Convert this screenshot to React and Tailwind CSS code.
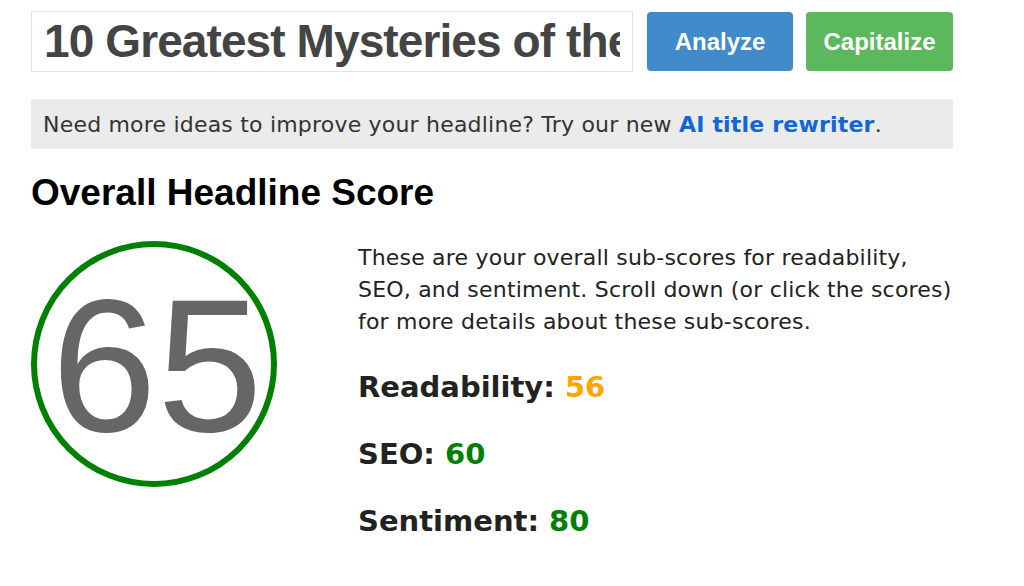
export default function App() {
  return (
    <div className="w-[1024px] h-[586px] bg-white overflow-hidden pl-[31px] pt-[11px]" style={{ fontFamily: '"Liberation Sans", Arial, sans-serif' }}>
      {/* Headline input + actions */}
      <div className="flex items-start w-[922px]">
        <input
          readOnly
          value="10 Greatest Mysteries of the Universe"
          className="w-[602px] h-[61px] border border-[#e3e3e3] px-[12px] text-[46px] tracking-[-0.9px] font-bold text-[#444] outline-none"
          style={{ fontFamily: '"Liberation Sans", Arial, sans-serif' }}
        />
        <button className="ml-[14px] mt-px w-[146px] h-[59px] rounded bg-[#428bca] text-white text-[24px] font-bold">
          Analyze
        </button>
        <button className="ml-[13px] mt-px w-[147px] h-[59px] rounded bg-[#5cb85c] text-white text-[24px] font-bold">
          Capitalize
        </button>
      </div>

      {/* Rewriter tip */}
      <div className="mt-[27px] w-[922px] h-[50px] bg-[#ebebeb] flex items-center px-[12px] text-[22px] text-[#333]" style={{ fontFamily: '"DejaVu Sans", Verdana, sans-serif' }}>
        <span className="tracking-[0.2px]">
          Need more ideas to improve your headline? Try our new <a className="text-[#1266d9] font-bold">AI title rewriter</a>.
        </span>
      </div>

      <h2 className="mt-[23px] text-[37px] leading-[42px] font-bold text-black">Overall Headline Score</h2>

      <div className="flex mt-[27px]">
        {/* Score ring */}
        <div className="w-[246px] h-[246px] rounded-full border-[6px] border-[#008000] flex items-center justify-center shrink-0 pl-[6px]">
          <span className="text-[190px] leading-none text-[#666] mt-[2px]">65</span>
        </div>

        {/* Sub-scores */}
        <div className="ml-[81px] mt-[1px] text-[#222]" style={{ fontFamily: '"DejaVu Sans", Verdana, sans-serif' }}>
          <p className="text-[22px] leading-[32px] w-[620px] tracking-[0.2px]">
            These are your overall sub-scores for readability,<br />
            SEO, and sentiment. Scroll down (or click the scores)<br />
            for more details about these sub-scores.
          </p>
          <p className="mt-[32px] text-[29px] font-bold leading-[34px]">
            Readability: <span className="text-[#ffa500]">56</span>
          </p>
          <p className="mt-[33px] text-[29px] font-bold leading-[34px]">
            SEO: <span className="text-[#008000]">60</span>
          </p>
          <p className="mt-[33px] text-[29px] font-bold leading-[34px]">
            Sentiment: <span className="text-[#008000]">80</span>
          </p>
        </div>
      </div>
    </div>
  );
}
